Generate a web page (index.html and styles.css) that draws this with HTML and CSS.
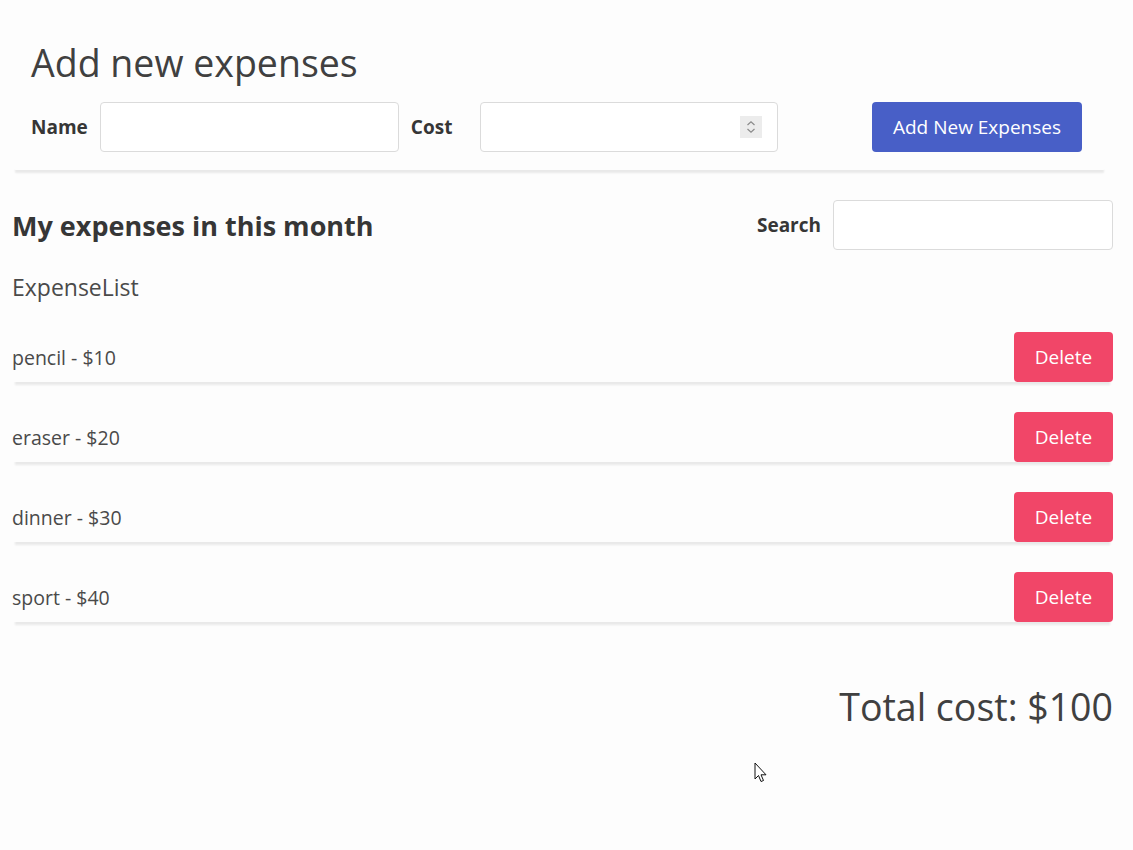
FILE: index.html
```html
<!DOCTYPE html>
<html lang="en">
<head>
<meta charset="utf-8">
<title>Expenses</title>
<link rel="stylesheet" href="styles.css">
</head>
<body>
<div class="page">
  <section class="box form-box">
    <h1 class="title-main">Add new expenses</h1>
    <form class="form-row">
      <label class="label">Name</label>
      <input class="input name-input" type="text">
      <label class="label cost-label">Cost</label>
      <div class="number-field">
        <input class="input cost-input" type="text">
        <span class="spinner">
          <svg width="22" height="22" viewBox="0 0 22 22"><path d="M7.5 9 L11 5.8 L14.5 9" fill="none" stroke="#8a8a8a" stroke-width="1.2"/><path d="M7.5 13 L11 16.2 L14.5 13" fill="none" stroke="#8a8a8a" stroke-width="1.2"/></svg>
        </span>
      </div>
      <button class="button is-link" type="button">Add New Expenses</button>
    </form>
  </section>

  <div class="list-head">
    <h2 class="title-list">My expenses in this month</h2>
    <div class="search">
      <label class="label">Search</label>
      <input class="input search-input" type="text">
    </div>
  </div>

  <h3 class="subtitle">ExpenseList</h3>

  <ul class="items">
    <li class="item"><span class="item-text">pencil - $10</span><button class="button is-danger" type="button">Delete</button></li>
    <li class="item"><span class="item-text">eraser - $20</span><button class="button is-danger" type="button">Delete</button></li>
    <li class="item"><span class="item-text">dinner - $30</span><button class="button is-danger" type="button">Delete</button></li>
    <li class="item"><span class="item-text">sport - $40</span><button class="button is-danger" type="button">Delete</button></li>
  </ul>

  <p class="total">Total cost: $100</p>
</div>
<svg class="cursor" width="14" height="22" viewBox="0 0 14 22"><path d="M1 1 L1 17 L4.5 13.5 L7 19.5 L9.5 18.5 L7 12.8 L12 12.8 Z" fill="#fff" stroke="#111" stroke-width="1" stroke-linejoin="miter"/></svg>
</body>
</html>
```

FILE: styles.css
```css
html, body {
  margin: 0;
  padding: 0;
  background: #fdfdfd;
}
body {
  font-family: "Open Sans", "Noto Sans", sans-serif;
  color: #4a4a4a;
  position: relative;
  min-height: 850px;
}
.page {
  padding: 12px 20px 0 12px;
}
.box {
  background: #fdfdfd;
  box-shadow: 0 6px 2px -3px #e9e9e9;
  border-radius: 4px;
}
.form-box {
  padding: 28px 24px 18px 19px;
  margin-right: 6px;
}
.title-main {
  margin: 0 0 17px;
  font-size: 37.5px;
  font-weight: 400;
  line-height: 45px;
  color: #404040;
}
.form-row {
  display: flex;
  align-items: center;
  margin: 0;
}
.label {
  font-size: 19px;
  font-weight: 700;
  color: #363636;
}
.input {
  box-sizing: border-box;
  height: 50px;
  border: 1px solid #dbdbdb;
  border-radius: 4px;
  background: #fff;
  font-family: inherit;
  font-size: 19px;
  padding: 0 12px;
  outline: none;
}
.name-input {
  width: 299px;
  margin-left: 12px;
}
.cost-label {
  margin-left: 12px;
}
.number-field {
  position: relative;
  margin-left: 28px;
}
.cost-input {
  width: 298px;
}
.spinner {
  position: absolute;
  right: 16px;
  top: 14px;
  width: 22px;
  height: 22px;
  background: #ececec;
  display: flex;
}
.button {
  box-sizing: border-box;
  height: 50px;
  border: none;
  border-radius: 4px;
  font-family: inherit;
  font-size: 19px;
  color: #fff;
  padding: 0 16px;
  cursor: pointer;
}
.is-link {
  background: #485fc7;
  width: 210px;
  margin-left: auto;
  margin-right: 1px;
}
.is-danger {
  background: #f14668;
  width: 99px;
}
.list-head {
  display: flex;
  align-items: center;
  justify-content: space-between;
  margin-top: 30px;
}
.title-list {
  margin: 0;
  font-size: 27px;
  font-weight: 700;
  color: #363636;
}
.search {
  display: flex;
  align-items: center;
}
.search-input {
  width: 280px;
  margin-left: 12px;
}
.subtitle {
  margin: 21px 0 0;
  font-size: 23px;
  font-weight: 400;
  line-height: 32px;
  color: #4a4a4a;
}
.items {
  list-style: none;
  margin: 29px 0 0;
  padding: 0;
  display: flex;
  flex-direction: column;
  gap: 30px;
}
.item {
  display: flex;
  align-items: center;
  justify-content: space-between;
  height: 50px;
  box-shadow: 0 6px 2px -3px #e9e9e9;
}
.item-text {
  font-size: 19.5px;
}
.total {
  margin: 60px 0 0;
  text-align: right;
  font-size: 37.5px;
  line-height: 50px;
  color: #404040;
}
.cursor {
  position: absolute;
  left: 754px;
  top: 762px;
}
```
